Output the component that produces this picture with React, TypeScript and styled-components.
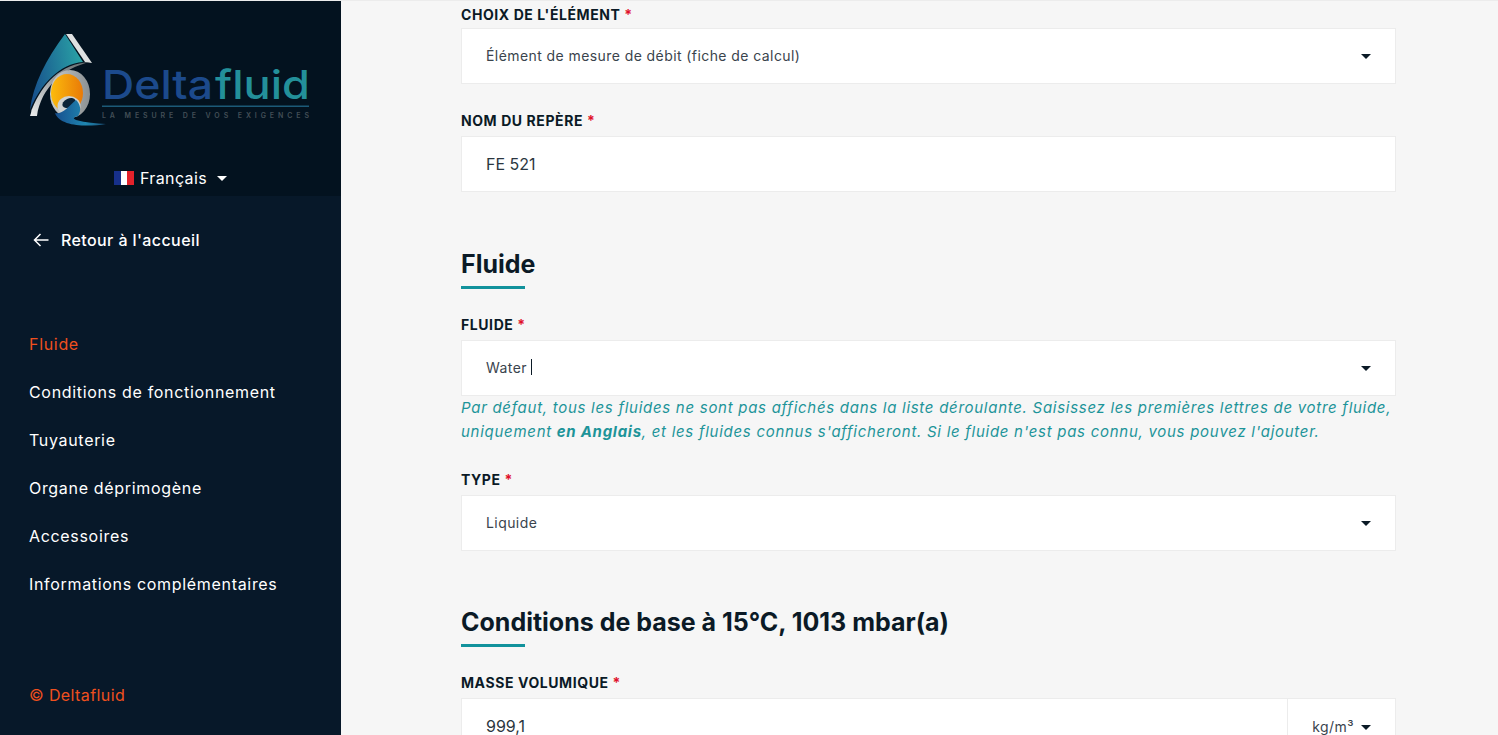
import styled, { createGlobalStyle } from "styled-components"

const GlobalStyle = createGlobalStyle`
    html, body {
        margin: 0;
        padding: 0;
        height: 100%;
        overflow: hidden;
        background: #f6f6f6;
    }

    * {
        box-sizing: border-box;
    }
`

const navItems = [
    "Fluide",
    "Conditions de fonctionnement",
    "Tuyauterie",
    "Organe déprimogène",
    "Accessoires",
    "Informations complémentaires",
]

const Caret = ({ color = "#0b1a26" }: { color?: string }) => (
    <svg width="10" height="5" viewBox="0 0 10 5">
        <path d="M0 0h10L5 5z" fill={color} />
    </svg>
)

const LogoMark = () => (
    <svg width="282" height="95" viewBox="0 0 282 95">
        <defs>
            <linearGradient id="roof" x1="0" y1="0.6" x2="1" y2="0.4">
                <stop offset="0" stopColor="#17508c" />
                <stop offset="1" stopColor="#2aa3a6" />
            </linearGradient>
            <linearGradient id="silver" x1="0" y1="1" x2="1" y2="0">
                <stop offset="0" stopColor="#eceeee" />
                <stop offset="0.5" stopColor="#9ea3a5" />
                <stop offset="1" stopColor="#5f6669" />
            </linearGradient>
            <linearGradient id="ring" x1="0" y1="0" x2="1" y2="0">
                <stop offset="0" stopColor="#c9cccc" />
                <stop offset="1" stopColor="#8b9092" />
            </linearGradient>
            <linearGradient id="sun" x1="0" y1="0" x2="1" y2="0">
                <stop offset="0" stopColor="#fcbb0c" />
                <stop offset="1" stopColor="#e97a08" />
            </linearGradient>
            <linearGradient id="wave" x1="0" y1="0" x2="1" y2="0">
                <stop offset="0" stopColor="#174f8f" />
                <stop offset="0.6" stopColor="#1f86b0" />
                <stop offset="1" stopColor="#1a4f78" />
            </linearGradient>
        </defs>
        <path d="M35 1 L53 29 C30 31 11 50 0 77 C3 52 16 26 35 1 Z" fill="url(#roof)" />
        <path d="M36 1 L42 1 L62 30 L55 29 Z" fill="#dfe1e1" />
        <path d="M0 83 C2 78 1 77 2 76 C13 50 30 31 60 29 C33 35 11 55 7 83 Z" fill="url(#silver)" />
        <ellipse cx="40" cy="61" rx="20" ry="24" fill="url(#ring)" />
        <ellipse cx="37" cy="60" rx="16" ry="19" fill="url(#sun)" />
        <ellipse cx="39" cy="73" rx="11.5" ry="10" fill="#cfd2d2" />
        <ellipse cx="39" cy="70" rx="7" ry="4.5" transform="rotate(-25 39 70)" fill="#0a2338" />
        <path d="M25 80 C32 82 38 74 46 67 C50 71 52 77 48 83 C44 84 42 85 46 87 C56 90 66 90 76 91 C58 94 30 94 25 80 Z" fill="url(#wave)" />
        <text x="72" y="66" fontFamily="Inter, sans-serif" fontSize="40" fontWeight="500" fill="#1c4a8c" textLength="111" lengthAdjust="spacingAndGlyphs">Delta</text>
        <text x="185" y="66" fontFamily="Inter, sans-serif" fontSize="40" fontWeight="500" fill="#23909a" textLength="95" lengthAdjust="spacingAndGlyphs">fluid</text>
        <rect x="72" y="72.5" width="207" height="1.5" fill="#1c5a78" />
        <text x="72" y="85" fontFamily="Inter, sans-serif" fontSize="7" fontWeight="600" fill="#424e56" textLength="207">LA MESURE DE VOS EXIGENCES</text>
    </svg>
)

const Flag = () => (
    <FlagBox>
        <FlagStripe $color="#17308a" />
        <FlagStripe $color="#ffffff" />
        <FlagStripe $color="#e3222b" />
    </FlagBox>
)

const SelectField = ({ label, value }: { label: string; value: string }) => (
    <Field>
        <Label>{label} <Required>*</Required></Label>
        <InputBox>
            <SmallValue>{value}</SmallValue>
            <Caret />
        </InputBox>
    </Field>
)

export default function App() {
    return (
        <Page>
            <GlobalStyle />
            <Sidebar>
                <SidebarTop>
                    <LogoWrap>
                        <LogoMark />
                    </LogoWrap>
                    <Language>
                        <Flag />
                        <span>Français</span>
                        <Caret color="#ffffff" />
                    </Language>
                </SidebarTop>
                <SidebarBody>
                    <BackLink>
                        <svg width="16" height="14" viewBox="0 0 16 14" fill="none" stroke="#fff" strokeWidth="1.5">
                            <path d="M15.5 7H1.5M7.5 1 1.5 7l6 6" />
                        </svg>
                        Retour à l'accueil
                    </BackLink>
                    <Nav>
                        {navItems.map((item, i) => (
                            <NavItem key={item} $active={i === 0}>{item}</NavItem>
                        ))}
                    </Nav>
                    <Copyright>© Deltafluid</Copyright>
                </SidebarBody>
            </Sidebar>
            <Main>
                <SelectField label="CHOIX DE L'ÉLÉMENT" value="Élément de mesure de débit (fiche de calcul)" />
                <Field>
                    <Label>NOM DU REPÈRE <Required>*</Required></Label>
                    <InputBox>
                        <Value>FE 521</Value>
                    </InputBox>
                </Field>

                <Title $top={56}>Fluide</Title>
                <Field>
                    <Label>FLUIDE <Required>*</Required></Label>
                    <InputBox>
                        <SmallValue>Water<TextCursor /></SmallValue>
                        <Caret />
                    </InputBox>
                    <Help>
                        Par défaut, tous les fluides ne sont pas affichés dans la liste déroulante. Saisissez les premières lettres de votre fluide,
                        uniquement <strong>en Anglais</strong>, et les fluides connus s'afficheront. Si le fluide n'est pas connu, vous pouvez l'ajouter.
                    </Help>
                </Field>
                <SelectField label="TYPE" value="Liquide" />

                <Title $top={55}>Conditions de base à 15°C, 1013 mbar(a)</Title>
                <Field>
                    <Label>MASSE VOLUMIQUE <Required>*</Required></Label>
                    <InputBox>
                        <Value>999,1</Value>
                        <Unit>
                            <SmallValue>kg/m³</SmallValue>
                            <Caret />
                        </Unit>
                    </InputBox>
                </Field>
            </Main>
        </Page>
    )
}

const Page = styled.div`
    display: flex;
    height: 735px;
    overflow: hidden;
    font-family: Inter, "Liberation Sans", sans-serif;
    border-top: 1px solid #ececec;
`

const Sidebar = styled.aside`
    width: 341px;
    flex-shrink: 0;
    display: flex;
    flex-direction: column;
    background: #071829;
    color: #ffffff;
`

const SidebarTop = styled.div`
    height: 195px;
    padding: 32px 0 0 30px;
    background: #03121f;
`

const LogoWrap = styled.div`
    height: 95px;
`

const Language = styled.div`
    width: 281px;
    margin-top: 38px;
    display: flex;
    align-items: center;
    justify-content: center;
    gap: 6px;
    font-size: 16px;
    line-height: 24px;
    letter-spacing: 0.4px;

    svg {
        margin-left: 4px;
    }
`

const FlagBox = styled.div`
    width: 20px;
    height: 14px;
    display: flex;
`

const FlagStripe = styled.div<{ $color: string }>`
    flex: 1;
    background: ${(p) => p.$color};
`

const SidebarBody = styled.div`
    flex: 1;
    display: flex;
    flex-direction: column;
    padding: 32px 0 0 29px;
`

const BackLink = styled.div`
    display: flex;
    align-items: center;
    gap: 12px;
    padding-left: 4px;
    font-size: 16px;
    font-weight: 500;
    line-height: 24px;
    letter-spacing: 0.4px;
`

const Nav = styled.nav`
    margin-top: 80px;
    display: flex;
    flex-direction: column;
    gap: 24px;
`

const NavItem = styled.a<{ $active?: boolean }>`
    font-size: 16px;
    line-height: 24px;
    letter-spacing: 0.68px;
    color: ${(p) => (p.$active ? "#f0501e" : "#ffffff")};
`

const Copyright = styled.div`
    margin-top: 87px;
    font-size: 16px;
    line-height: 24px;
    letter-spacing: 0.4px;
    color: #f0501e;
`

const Field = styled.div`
    margin-bottom: 27px;
`

const Label = styled.label`
    display: block;
    height: 20px;
    margin-bottom: 5px;
    font-size: 14px;
    font-weight: 700;
    line-height: 20px;
    letter-spacing: 0.58px;
`

const Main = styled.main`
    flex: 1;
    padding: 4px 102px 0 120px;
    background: #f6f6f6;
    color: #0b1a26;

    ${Field}:first-child ${Label} {
        margin-bottom: 3px;
    }
`

const Required = styled.span`
    color: #e0102a;
`

const InputBox = styled.div`
    height: 56px;
    display: flex;
    align-items: center;
    justify-content: space-between;
    padding-left: 24px;
    padding-right: 24px;
    background: #ffffff;
    border: 1px solid #ececec;
`

const Value = styled.span`
    font-size: 16px;
    color: #2b3640;
`

const SmallValue = styled.span`
    display: flex;
    align-items: center;
    padding-bottom: 2px;
    font-size: 14px;
    letter-spacing: 0.42px;
    color: #3a444d;
`

const TextCursor = styled.i`
    width: 1px;
    height: 16px;
    margin-left: 4px;
    background: #0b1a26;
`

const Unit = styled.div`
    align-self: stretch;
    width: 108px;
    margin-right: -24px;
    padding-top: 2px;
    display: flex;
    align-items: center;
    justify-content: center;
    gap: 7px;
    border-left: 1px solid #ececec;
`

const Title = styled.h2<{ $top: number }>`
    width: fit-content;
    margin: ${(p) => p.$top}px 0 26px;
    font-size: 25px;
    font-weight: 700;
    line-height: 32px;
    color: #0b1a26;

    &::after {
        content: "";
        display: block;
        width: 64px;
        height: 3px;
        margin-top: 6px;
        background: #12929c;
    }
`

const Help = styled.p`
    margin: 0 0 -1px;
    font-size: 15px;
    font-style: italic;
    line-height: 24px;
    letter-spacing: 0.72px;
    color: #1d9499;

    strong {
        font-weight: 700;
    }
`
